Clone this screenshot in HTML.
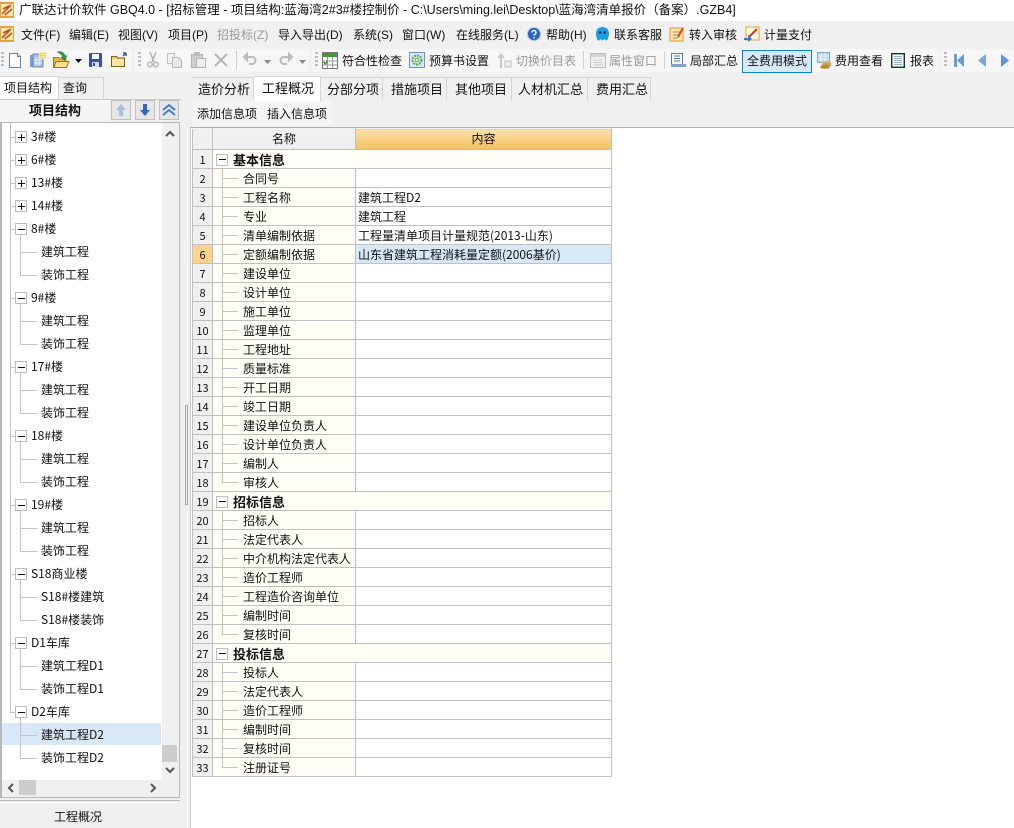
<!DOCTYPE html>
<html lang="zh"><head><meta charset="utf-8"><title>广联达计价软件 GBQ4.0</title>
<style>
html,body{margin:0;padding:0;width:1014px;height:828px;overflow:hidden;background:#f0f0f0}
body{position:relative;font:12px/16px "Liberation Sans","Noto Sans CJK SC",sans-serif;color:#111}
.a{position:absolute}
.t{position:absolute;white-space:nowrap;line-height:16px}
.g{color:#9a9a9a}
.s{font-family:"WenQuanYi Zen Hei","Noto Sans CJK SC",sans-serif}
svg{position:absolute;overflow:visible}
.tree div.l{position:absolute;background:#c4c4c4}
.box{position:absolute;left:15px;width:10px;height:10px;border:1px solid #bdbdbd;background:#fff}
.box:before{content:"";position:absolute;left:2px;top:5px;width:7px;height:1px;background:#111}
.box.p:after{content:"";position:absolute;left:5px;top:2px;width:1px;height:7px;background:#111}
.tree .t{font-family:"WenQuanYi Zen Hei","Noto Sans CJK SC",sans-serif;font-size:12px}
table{position:absolute;left:192px;top:128px;border-collapse:collapse;table-layout:fixed;width:420px;font-family:"WenQuanYi Zen Hei","Noto Sans CJK SC",sans-serif;font-size:12px}
td{height:16px;padding:2px 0 0;border:1px solid #c0c0c0;white-space:nowrap;position:relative;line-height:16px;overflow:hidden;vertical-align:top}
tr:first-child td{height:18px;border-top-color:#f4f4f4}
td.n{background:#f0f0f0;text-align:center;font-size:11px}
td.h{background:#f0f0f0;text-align:center}
td.o{background:linear-gradient(#fbdfa8,#f3c063);text-align:center}
td.c{background:#fffef6;padding-left:30px}
td.c:before{content:"";position:absolute;left:9px;top:0;bottom:0;width:1px;background:#c4c4c4}
td.c:after{content:"";position:absolute;left:9px;top:9px;width:16px;height:1px;background:#c4c4c4}
td.e:before{bottom:9px}
td.v{padding-left:2px;background:#fff}
td.b{background:#fffef6;font-weight:bold;font-size:13px;padding-left:20px}
td.b:before{content:"";position:absolute;left:3px;top:4px;width:10px;height:10px;border:1px solid #bdbdbd;background:#fff}
td.b:after{content:"";position:absolute;left:6px;top:9px;width:7px;height:1px;background:#111}
.sel{background:#d8e8f6!important}
.sep{position:absolute;width:1px;height:18px;top:51px;background:#d0d0d0}
.grip{position:absolute;width:3px;height:16px;top:52px;background:repeating-linear-gradient(#bdbdbd 0 2px,transparent 2px 4px)}
.tab{position:absolute;top:77px;height:23px;line-height:23px;text-align:left;font-size:13px;border-right:1px solid #d4d4d4;border-top:1px solid #d4d4d4;box-sizing:border-box;background:#f0f0f0;white-space:nowrap}
.btn{position:absolute;top:100px;width:20px;height:20px;box-sizing:border-box;border:1px solid #c0c0c0;background:#e6e6e6}
</style></head><body>

<!-- title bar -->
<div class="a" style="left:0;top:0;width:1014px;height:21px;background:#fff"></div>
<svg style="left:0;top:2px" width="14" height="16" viewBox="0 0 14 16"><rect x="0" y="0" width="14" height="16" fill="#e8a23a"/><rect x="1" y="2" width="12" height="12" fill="#fde9b4"/><path d="M2 12L11 3M3 7l6-3M5 13l7-6" stroke="#c5501e" stroke-width="1.6" fill="none"/></svg>
<div class="t" style="left:19px;top:2px;font-size:12.5px">广联达计价软件 GBQ4.0 - [招标管理 - 项目结构:蓝海湾2#3#楼控制价 - C:\Users\ming.lei\Desktop\蓝海湾清单报价（备案）.GZB4]</div>

<!-- menu bar -->
<svg style="left:0;top:26px" width="14" height="16" viewBox="0 0 14 16"><rect x="0" y="0" width="14" height="16" fill="#e8a23a"/><rect x="1" y="2" width="12" height="12" fill="#fde9b4"/><path d="M2 12L11 3M3 7l6-3M5 13l7-6" stroke="#c5501e" stroke-width="1.6" fill="none"/></svg>
<div class="t" style="left:21px;top:27px">文件(F)</div>
<div class="t" style="left:69px;top:27px">编辑(E)</div>
<div class="t" style="left:118px;top:27px">视图(V)</div>
<div class="t" style="left:168px;top:27px">项目(P)</div>
<div class="t g" style="left:217px;top:27px">招投标(Z)</div>
<div class="t" style="left:278px;top:27px">导入导出(D)</div>
<div class="t" style="left:353px;top:27px">系统(S)</div>
<div class="t" style="left:402px;top:27px">窗口(W)</div>
<div class="t" style="left:456px;top:27px">在线服务(L)</div>
<svg style="left:527px;top:27px" width="14" height="14" viewBox="0 0 14 14"><circle cx="7" cy="7" r="6.5" fill="#2a62c8" stroke="#a9c4ea"/><path d="M5 5.500a2 2 0 1 1 3 1.700c-.8.5-1 .9-1 1.600" stroke="#fff" stroke-width="1.400" fill="none"/><rect x="6.300" y="10" width="1.500" height="1.500" fill="#fff"/></svg>
<div class="t" style="left:546px;top:27px">帮助(H)</div>
<svg style="left:595px;top:26px" width="15" height="16" viewBox="0 0 15 16"><path d="M7.500 1C3.500 1 1 3.500 1 7.500c0 3 1 7 2.500 7s1.500-1.500 2-1.500 1 1.500 2 1.500 1.500-1.500 2-1.500 1 1.500 2 1.500S14 10.500 14 7.500C14 3.500 11.500 1 7.500 1z" fill="#18a0e0"/><circle cx="5.200" cy="6.500" r="1.300" fill="#063a60"/><circle cx="9.800" cy="6.500" r="1.300" fill="#063a60"/></svg>
<div class="t" style="left:614px;top:27px">联系客服</div>
<svg style="left:669px;top:26px" width="16" height="16" viewBox="0 0 16 16"><rect x="1" y="2" width="13" height="13" fill="#fbe3b0" stroke="#dd9a30"/><path d="M4 6h7M4 9h6M4 12h5" stroke="#b58a50"/><path d="M9 11L14 2" stroke="#c5501e" stroke-width="2"/></svg>
<div class="t" style="left:689px;top:27px">转入审核</div>
<svg style="left:744px;top:26px" width="16" height="16" viewBox="0 0 16 16"><rect x="2" y="1" width="13" height="13" fill="#fff6e0" stroke="#e0a030"/><path d="M5 11L13 3" stroke="#c8352a" stroke-width="2"/><path d="M0 12h4V9l4 4-4 3v-2H0z" fill="#2a78d0"/></svg>
<div class="t" style="left:764px;top:27px">计量支付</div>

<!-- toolbars -->
<div class="a" style="left:0;top:49px;width:132px;height:23px;background:#f6f6f6;border-radius:3px"></div>
<div class="a" style="left:135px;top:49px;width:174px;height:23px;background:#f6f6f6;border-radius:3px"></div>
<div class="a" style="left:312px;top:49px;width:627px;height:23px;background:#f6f6f6;border-radius:3px"></div>
<div class="a" style="left:941px;top:49px;width:73px;height:23px;background:#f6f6f6;border-radius:3px"></div>
<div class="grip" style="left:1px"></div><div class="grip" style="left:138px"></div><div class="grip" style="left:315px"></div><div class="grip" style="left:944px"></div>

<svg style="left:9px;top:53px" width="12" height="15" viewBox="0 0 12 15"><path d="M.5.500h8l3 3v11H.5z" fill="#fff" stroke="#6f7f9a"/><path d="M8.500.500v3h3" fill="#dde3ee" stroke="#6f7f9a"/></svg>
<svg style="left:30px;top:52px" width="16" height="16" viewBox="0 0 16 16"><rect x="0" y="3" width="4" height="12" fill="#7f9fd0"/><rect x="3" y="2" width="10" height="13" fill="#a8c0e4" stroke="#6f87b5"/><path d="M6 5v9M9 5v9M4 8h8M4 11h8" stroke="#e8f0fa"/><rect x="9" y="0" width="7" height="7" fill="#fde89a"/><path d="M10 1.500h5M10 3.500h5M10 5.500h5" stroke="#f2c340" stroke-dasharray="1 1"/></svg>
<svg style="left:53px;top:51px" width="17" height="18" viewBox="0 0 17 18"><path d="M.5 6.500h5l1.500 1.500h6v8H.5z" fill="#e8b84a" stroke="#9a7420"/><path d="M1 16.500l2-6h13l-2.500 6z" fill="#fbdf8a" stroke="#9a7420"/><path d="M4 1c4-1 7 0 8 4l2-.5-2.500 5L8 6l2 .5C9 4 7 2 4 1z" fill="#27a03a" stroke="#1a6a2a" stroke-width=".5"/></svg>
<svg style="left:75px;top:59px" width="7" height="4" viewBox="0 0 7 4"><path d="M0 0h7L3.500 4z" fill="#111"/></svg>
<svg style="left:89px;top:53px" width="13" height="14" viewBox="0 0 13 14"><rect width="13" height="14" rx="1" fill="#3a4fa8"/><rect x="3" y="1" width="7" height="5" fill="#fff"/><rect x="3" y="9" width="7" height="5" fill="#d8dcec"/><rect x="4" y="10" width="2" height="3" fill="#3a4fa8"/></svg>
<svg style="left:111px;top:52px" width="16" height="15" viewBox="0 0 16 15"><path d="M.5 4.500h5l1 1.500h7v8.500H.5z" fill="#f2cd6a" stroke="#7a5e20"/><rect x="1" y="7" width="12" height="7" fill="#fbe4a2"/><path d="M12 4l3-3M15 1v3M15 1h-3" stroke="#3a5a8a" stroke-width="1.500"/></svg>

<svg style="left:147px;top:52px" width="12" height="16" viewBox="0 0 12 16"><path d="M3 0l4 10M9 0L5 10" stroke="#b5b5b5" stroke-width="1.500"/><circle cx="3" cy="12.500" r="2.300" fill="none" stroke="#b5b5b5" stroke-width="1.400"/><circle cx="9" cy="12.500" r="2.300" fill="none" stroke="#b5b5b5" stroke-width="1.400"/></svg>
<svg style="left:167px;top:53px" width="15" height="15" viewBox="0 0 15 15"><path d="M.5.500h7v10h-7z" fill="#f2f2f2" stroke="#c0c0c0"/><path d="M5.500 4.500h6l3 3v7h-9z" fill="#e8e8e8" stroke="#bbb"/></svg>
<svg style="left:191px;top:52px" width="15" height="16" viewBox="0 0 15 16"><rect x=".5" y="2.500" width="11" height="13" fill="#cfcfcf" stroke="#b0b0b0"/><rect x="3" y="0" width="6" height="4" fill="#bbb"/><path d="M5.500 6.500h9v9h-9z" fill="#eee" stroke="#b5b5b5"/></svg>
<svg style="left:214px;top:53px" width="14" height="14" viewBox="0 0 14 14"><path d="M1 1l12 12M13 1L1 13" stroke="#b5b5b5" stroke-width="2"/></svg>
<div class="sep" style="left:236px"></div>
<svg style="left:244px;top:54px" width="12" height="13" viewBox="0 0 12 13"><path d="M3 3h5a3.300 3.300 0 0 1 0 7H5M3 0L0 3l3 3z" fill="none" stroke="#bcbcbc" stroke-width="2"/></svg>
<svg style="left:264px;top:60px" width="7" height="4" viewBox="0 0 7 4"><path d="M0 0h7L3.500 4z" fill="#888"/></svg>
<svg style="left:280px;top:54px" width="12" height="13" viewBox="0 0 12 13"><path d="M9 3H4a3.300 3.300 0 0 0 0 7h3M9 0l3 3-3 3z" fill="none" stroke="#bcbcbc" stroke-width="2"/></svg>
<svg style="left:299px;top:60px" width="7" height="4" viewBox="0 0 7 4"><path d="M0 0h7L3.500 4z" fill="#888"/></svg>

<svg style="left:322px;top:52px" width="16" height="17" viewBox="0 0 16 17"><rect x=".5" y=".5" width="15" height="16" fill="#fff" stroke="#777"/><rect x="1" y="1" width="14" height="4" fill="#3c9a3c"/><path d="M1 9h14M1 13h14M5.500 5v11M10.500 5v11" stroke="#9a9a9a"/><path d="M1.500 10l2 2 2-3" stroke="#2a8a2a" fill="none" stroke-width="1.300"/></svg>
<div class="t" style="left:342px;top:53px">符合性检查</div>
<svg style="left:409px;top:52px" width="16" height="16" viewBox="0 0 16 16"><rect x=".5" y=".5" width="15" height="15" fill="#dbe8f6" stroke="#6f94c4"/><circle cx="8" cy="8" r="4.500" fill="none" stroke="#54a84a" stroke-width="2" stroke-dasharray="2 1"/><circle cx="8" cy="8" r="1.800" fill="#e8f4d8" stroke="#54a84a"/></svg>
<div class="t" style="left:429px;top:53px">预算书设置</div>
<svg style="left:496px;top:53px" width="16" height="15" viewBox="0 0 16 15"><path d="M4 15V5H1l4-5 4 5H6v10z" fill="#c9c9c9"/><path d="M9 8h6v6H9z" fill="#eee" stroke="#bdbdbd"/></svg>
<div class="t g" style="left:516px;top:53px">切换价目表</div>
<div class="sep" style="left:583px"></div>
<svg style="left:590px;top:53px" width="16" height="15" viewBox="0 0 16 15"><rect x=".5" y=".5" width="15" height="14" fill="#f2f2f2" stroke="#bdbdbd"/><rect x="1" y="1" width="14" height="3" fill="#d6d6d6"/><path d="M3 7h10M3 9.500h10M3 12h10" stroke="#c8c8c8"/></svg>
<div class="t g" style="left:609px;top:53px">属性窗口</div>
<div class="sep" style="left:664px"></div>
<svg style="left:671px;top:53px" width="15" height="15" viewBox="0 0 15 15"><rect x=".5" y=".5" width="11" height="12" fill="#f4f8fc" stroke="#5a7ea6"/><path d="M3 3h6M3 5.500h6M3 8h6" stroke="#4a7ab0"/><rect x="0" y="11" width="15" height="3" fill="#7aa4cc"/></svg>
<div class="t" style="left:690px;top:53px">局部汇总</div>
<div class="a" style="left:742px;top:50px;width:70px;height:23px;box-sizing:border-box;border:1px solid #0a84d8;background:#d8eafa"></div>
<div class="t" style="left:747px;top:53px">全费用模式</div>
<svg style="left:817px;top:52px" width="15" height="17" viewBox="0 0 15 17"><rect x=".5" y=".5" width="12" height="10" fill="#b9d3f0" stroke="#7fa5d0"/><path d="M4 1v9M8 1v9M1 4h11M1 7h11" stroke="#eef5fc"/><ellipse cx="9.500" cy="11" rx="5" ry="1.800" fill="#dcb565"/><ellipse cx="9.500" cy="13" rx="5" ry="1.800" fill="#c99f4c"/><ellipse cx="8" cy="15" rx="5" ry="1.800" fill="#b58a3a"/></svg>
<div class="t" style="left:835px;top:53px">费用查看</div>
<svg style="left:891px;top:53px" width="14" height="15" viewBox="0 0 14 15"><rect x=".7" y=".7" width="12.600" height="13.600" fill="#f4f8fb" stroke="#0c3c20" stroke-width="1.400"/><path d="M3 3.500h8M3 5.500h8M3 7.500h8M3 9.500h8M3 11.500h8" stroke="#9ab2c8"/></svg>
<div class="t" style="left:910px;top:53px">报表</div>
<svg style="left:954px;top:54px" width="10" height="13" viewBox="0 0 10 13"><rect width="3" height="13" fill="#6d9bd8"/><path d="M10 0v13L3 6.500z" fill="#6d9bd8"/></svg>
<svg style="left:978px;top:54px" width="8" height="13" viewBox="0 0 8 13"><path d="M8 0v13L0 6.500z" fill="#7aa6de"/></svg>
<svg style="left:1001px;top:54px" width="8" height="13" viewBox="0 0 8 13"><path d="M0 0v13L8 6.500z" fill="#5f93dc"/></svg>

<!-- left tabs -->
<div class="a" style="left:0;top:76px;width:59px;height:24px;background:#fff;border-top:1px solid #d4d4d4;border-right:1px solid #d4d4d4;box-sizing:border-box"></div>
<div class="t" style="left:4px;top:80px;font-size:12px">项目结构</div>
<div class="a" style="left:59px;top:77px;width:45px;height:22px;border-top:1px solid #d4d4d4;border-right:1px solid #d4d4d4;box-sizing:border-box"></div>
<div class="t" style="left:63px;top:80px;font-size:12px">查询</div>
<div class="a" style="left:0;top:99px;width:181px;height:1px;background:#c8c8c8"></div>
<div class="a" style="left:0;top:100px;width:110px;height:22px;background:#f5f5f5"></div>
<div class="t" style="left:29px;top:103px;font-weight:bold;font-size:13px">项目结构</div>
<div class="btn" style="left:111px"></div>
<svg style="left:116px;top:104px" width="10" height="12" viewBox="0 0 10 12"><path d="M5 0l5 6H7v6H3V6H0z" fill="#a9c0d8"/></svg>
<div class="btn" style="left:135px"></div>
<svg style="left:140px;top:104px" width="10" height="12" viewBox="0 0 10 12"><path d="M5 12L0 6h3V0h4v6h3z" fill="#3465c0"/></svg>
<div class="btn" style="left:159px"></div>
<svg style="left:162px;top:104px" width="14" height="12" viewBox="0 0 14 12"><path d="M1 6l6-5 6 5M1 11l6-5 6 5" fill="none" stroke="#3a78c8" stroke-width="1.800"/></svg>

<!-- tree panel -->
<div class="a" style="left:0;top:122px;width:180px;height:676px;box-sizing:border-box;border:1px solid #b8b8b8;border-left:2px solid #b8b8b8;background:#f0f0f0"></div>
<div class="a" style="left:2px;top:123px;width:160px;height:657px;background:#fff"></div>
<div class="a sel" style="left:2px;top:723px;width:159px;height:22px"></div>
<div class="tree">
<div class="l" style="left:10px;top:123px;width:1px;height:589px"></div>
<div class="l" style="left:10px;top:137px;width:5px;height:1px"></div><div class="l" style="left:10px;top:160px;width:5px;height:1px"></div><div class="l" style="left:10px;top:183px;width:5px;height:1px"></div><div class="l" style="left:10px;top:206px;width:5px;height:1px"></div><div class="l" style="left:10px;top:229px;width:5px;height:1px"></div><div class="l" style="left:10px;top:298px;width:5px;height:1px"></div><div class="l" style="left:10px;top:367px;width:5px;height:1px"></div><div class="l" style="left:10px;top:436px;width:5px;height:1px"></div><div class="l" style="left:10px;top:505px;width:5px;height:1px"></div><div class="l" style="left:10px;top:574px;width:5px;height:1px"></div><div class="l" style="left:10px;top:643px;width:5px;height:1px"></div><div class="l" style="left:10px;top:712px;width:5px;height:1px"></div>

<div class="l" style="left:20px;top:235px;width:1px;height:41px"></div><div class="l" style="left:20px;top:252px;width:17px;height:1px"></div><div class="l" style="left:20px;top:275px;width:17px;height:1px"></div>
<div class="l" style="left:20px;top:304px;width:1px;height:41px"></div><div class="l" style="left:20px;top:321px;width:17px;height:1px"></div><div class="l" style="left:20px;top:344px;width:17px;height:1px"></div>
<div class="l" style="left:20px;top:373px;width:1px;height:41px"></div><div class="l" style="left:20px;top:390px;width:17px;height:1px"></div><div class="l" style="left:20px;top:413px;width:17px;height:1px"></div>
<div class="l" style="left:20px;top:442px;width:1px;height:41px"></div><div class="l" style="left:20px;top:459px;width:17px;height:1px"></div><div class="l" style="left:20px;top:482px;width:17px;height:1px"></div>
<div class="l" style="left:20px;top:511px;width:1px;height:41px"></div><div class="l" style="left:20px;top:528px;width:17px;height:1px"></div><div class="l" style="left:20px;top:551px;width:17px;height:1px"></div>
<div class="l" style="left:20px;top:580px;width:1px;height:41px"></div><div class="l" style="left:20px;top:597px;width:17px;height:1px"></div><div class="l" style="left:20px;top:620px;width:17px;height:1px"></div>
<div class="l" style="left:20px;top:649px;width:1px;height:41px"></div><div class="l" style="left:20px;top:666px;width:17px;height:1px"></div><div class="l" style="left:20px;top:689px;width:17px;height:1px"></div>
<div class="l" style="left:20px;top:718px;width:1px;height:41px"></div><div class="l" style="left:20px;top:735px;width:17px;height:1px"></div><div class="l" style="left:20px;top:758px;width:17px;height:1px"></div>

<div class="box p" style="top:131px"></div><div class="t" style="left:31px;top:129px">3#楼</div>
<div class="box p" style="top:154px"></div><div class="t" style="left:31px;top:152px">6#楼</div>
<div class="box p" style="top:177px"></div><div class="t" style="left:31px;top:175px">13#楼</div>
<div class="box p" style="top:200px"></div><div class="t" style="left:31px;top:198px">14#楼</div>
<div class="box" style="top:223px"></div><div class="t" style="left:31px;top:221px">8#楼</div>
<div class="t" style="left:41px;top:244px">建筑工程</div><div class="t" style="left:41px;top:267px">装饰工程</div>
<div class="box" style="top:292px"></div><div class="t" style="left:31px;top:290px">9#楼</div>
<div class="t" style="left:41px;top:313px">建筑工程</div><div class="t" style="left:41px;top:336px">装饰工程</div>
<div class="box" style="top:361px"></div><div class="t" style="left:31px;top:359px">17#楼</div>
<div class="t" style="left:41px;top:382px">建筑工程</div><div class="t" style="left:41px;top:405px">装饰工程</div>
<div class="box" style="top:430px"></div><div class="t" style="left:31px;top:428px">18#楼</div>
<div class="t" style="left:41px;top:451px">建筑工程</div><div class="t" style="left:41px;top:474px">装饰工程</div>
<div class="box" style="top:499px"></div><div class="t" style="left:31px;top:497px">19#楼</div>
<div class="t" style="left:41px;top:520px">建筑工程</div><div class="t" style="left:41px;top:543px">装饰工程</div>
<div class="box" style="top:568px"></div><div class="t" style="left:31px;top:566px">S18商业楼</div>
<div class="t" style="left:41px;top:589px">S18#楼建筑</div><div class="t" style="left:41px;top:612px">S18#楼装饰</div>
<div class="box" style="top:637px"></div><div class="t" style="left:31px;top:635px">D1车库</div>
<div class="t" style="left:41px;top:658px">建筑工程D1</div><div class="t" style="left:41px;top:681px">装饰工程D1</div>
<div class="box" style="top:706px"></div><div class="t" style="left:31px;top:704px">D2车库</div>
<div class="t" style="left:41px;top:727px">建筑工程D2</div><div class="t" style="left:41px;top:750px">装饰工程D2</div>
</div>

<!-- tree scrollbars -->
<svg style="left:165px;top:130px" width="10" height="7" viewBox="0 0 10 7"><path d="M1 6l4-4 4 4" fill="none" stroke="#555" stroke-width="2"/></svg>
<svg style="left:165px;top:767px" width="10" height="7" viewBox="0 0 10 7"><path d="M1 1l4 4 4-4" fill="none" stroke="#555" stroke-width="2"/></svg>
<div class="a" style="left:162px;top:745px;width:15px;height:17px;background:#cdcdcd"></div>
<svg style="left:7px;top:783px" width="7" height="10" viewBox="0 0 7 10"><path d="M6 1L2 5l4 4" fill="none" stroke="#555" stroke-width="2"/></svg>
<svg style="left:150px;top:783px" width="7" height="10" viewBox="0 0 7 10"><path d="M1 1l4 4-4 4" fill="none" stroke="#555" stroke-width="2"/></svg>
<div class="a" style="left:19px;top:780px;width:17px;height:15px;background:#cdcdcd"></div>

<!-- bottom button -->
<div class="a" style="left:0;top:800px;width:180px;height:1px;background:#b8b8b8"></div>
<div class="a" style="left:1px;top:802px;width:177px;height:26px;background:#efefef;border-top:1px solid #fff"></div>
<div class="t" style="left:54px;top:809px;font-size:12px">工程概况</div>

<!-- splitter -->
<div class="a" style="left:185px;top:405px;width:3px;height:100px;border:1px solid #a8a8a8;box-sizing:border-box;background:#f0f0f0"></div>

<!-- right tabs -->
<div class="a" style="left:192px;top:77px;width:459px;height:1px;background:#d4d4d4"></div>
<div class="tab" style="left:192px;width:62px;padding-left:6px">造价分析</div>
<div class="tab" style="left:254px;top:76px;width:67px;height:25px;background:#fff;padding-left:8px">工程概况</div>
<div class="tab" style="left:321px;width:62px;padding-left:6px">分部分项</div>
<div class="tab" style="left:383px;width:64px;padding-left:8px">措施项目</div>
<div class="tab" style="left:447px;width:65px;padding-left:8px">其他项目</div>
<div class="tab" style="left:512px;width:76px;padding-left:6px">人材机汇总</div>
<div class="tab" style="left:588px;width:63px;padding-left:8px">费用汇总</div>
<div class="a" style="left:192px;top:101px;width:140px;height:25px;background:#f5f5f5;border-radius:3px"></div>
<div class="t" style="left:197px;top:106px">添加信息项</div>
<div class="t" style="left:267px;top:106px">插入信息项</div>

<!-- main area -->
<div class="a" style="left:190px;top:127px;width:824px;height:701px;background:#fff;border-top:1px solid #b0b0b0;border-left:1px solid #c8c8c8;box-sizing:border-box"></div>

<table>
<colgroup><col style="width:20px"><col style="width:143px"><col style="width:256px"></colgroup>
<tr><td class="n"></td><td class="h">名称</td><td class="o">内容</td></tr>
<tr><td class="n">1</td><td class="b" colspan="2">基本信息</td></tr>
<tr><td class="n">2</td><td class="c">合同号</td><td class="v"></td></tr>
<tr><td class="n">3</td><td class="c">工程名称</td><td class="v">建筑工程D2</td></tr>
<tr><td class="n">4</td><td class="c">专业</td><td class="v">建筑工程</td></tr>
<tr><td class="n">5</td><td class="c">清单编制依据</td><td class="v">工程量清单项目计量规范(2013-山东)</td></tr>
<tr><td class="n" style="background:#fdd48d">6</td><td class="c">定额编制依据</td><td class="v sel">山东省建筑工程消耗量定额(2006基价)</td></tr>
<tr><td class="n">7</td><td class="c">建设单位</td><td class="v"></td></tr>
<tr><td class="n">8</td><td class="c">设计单位</td><td class="v"></td></tr>
<tr><td class="n">9</td><td class="c">施工单位</td><td class="v"></td></tr>
<tr><td class="n">10</td><td class="c">监理单位</td><td class="v"></td></tr>
<tr><td class="n">11</td><td class="c">工程地址</td><td class="v"></td></tr>
<tr><td class="n">12</td><td class="c">质量标准</td><td class="v"></td></tr>
<tr><td class="n">13</td><td class="c">开工日期</td><td class="v"></td></tr>
<tr><td class="n">14</td><td class="c">竣工日期</td><td class="v"></td></tr>
<tr><td class="n">15</td><td class="c">建设单位负责人</td><td class="v"></td></tr>
<tr><td class="n">16</td><td class="c">设计单位负责人</td><td class="v"></td></tr>
<tr><td class="n">17</td><td class="c">编制人</td><td class="v"></td></tr>
<tr><td class="n">18</td><td class="c e">审核人</td><td class="v"></td></tr>
<tr><td class="n">19</td><td class="b" colspan="2">招标信息</td></tr>
<tr><td class="n">20</td><td class="c">招标人</td><td class="v"></td></tr>
<tr><td class="n">21</td><td class="c">法定代表人</td><td class="v"></td></tr>
<tr><td class="n">22</td><td class="c">中介机构法定代表人</td><td class="v"></td></tr>
<tr><td class="n">23</td><td class="c">造价工程师</td><td class="v"></td></tr>
<tr><td class="n">24</td><td class="c">工程造价咨询单位</td><td class="v"></td></tr>
<tr><td class="n">25</td><td class="c">编制时间</td><td class="v"></td></tr>
<tr><td class="n">26</td><td class="c e">复核时间</td><td class="v"></td></tr>
<tr><td class="n">27</td><td class="b" colspan="2">投标信息</td></tr>
<tr><td class="n">28</td><td class="c">投标人</td><td class="v"></td></tr>
<tr><td class="n">29</td><td class="c">法定代表人</td><td class="v"></td></tr>
<tr><td class="n">30</td><td class="c">造价工程师</td><td class="v"></td></tr>
<tr><td class="n">31</td><td class="c">编制时间</td><td class="v"></td></tr>
<tr><td class="n">32</td><td class="c">复核时间</td><td class="v"></td></tr>
<tr><td class="n">33</td><td class="c e">注册证号</td><td class="v"></td></tr>
</table>
</body></html>
